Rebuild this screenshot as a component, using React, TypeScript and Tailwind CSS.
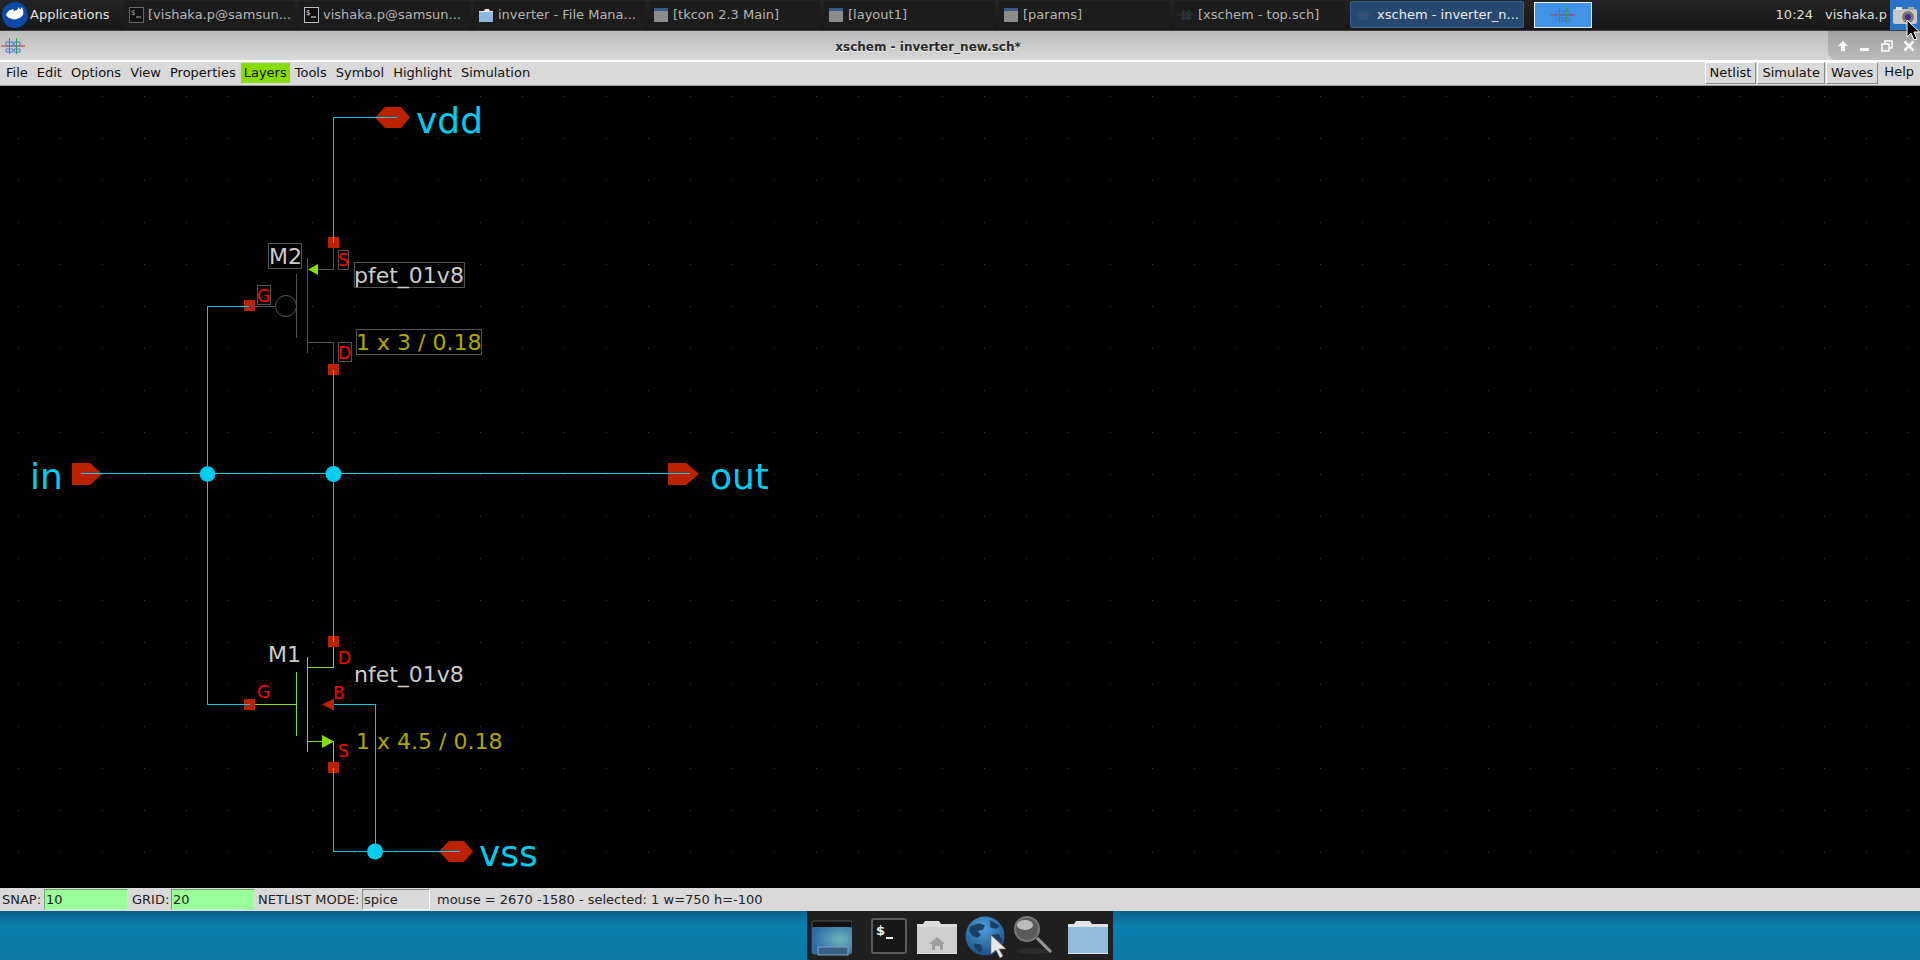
import React from "react";

const W = "#00ccee", R = "#bb2200", G = "#88dd00", S = "#555555", T = "#cccccc", O = "#aaaa00", X = "#ff0000";

function XIcon({ dim = false }: { dim?: boolean }) {
  return (
    <svg width="26" height="20" viewBox="0 0 26 20" className={dim ? "opacity-40" : ""}>
      <path d="M1 10h24" stroke="#c0392b" strokeWidth="1" />
      <path d="M9.500 2v16M16.500 2v16" stroke="#2e9e3a" strokeWidth="1" />
      <path d="M6 6h7v4H6zM6 13h7v3H6zM14 6h6v4h-6zM14 13h6v3h-6z" fill="none" stroke="#4a78c8" strokeWidth="1" />
    </svg>
  );
}

function TermIcon({ bright = false }: { bright?: boolean }) {
  return (
    <svg width="15" height="16" viewBox="0 0 15 16">
      <rect x="0.5" y="0.5" width="14" height="15" fill="#111" stroke={bright ? "#bbb" : "#666"} />
      <text x="2" y="8" fontSize="7" fill={bright ? "#eee" : "#aaa"}>$</text>
      <path d="M7 10h5" stroke={bright ? "#eee" : "#aaa"} />
    </svg>
  );
}

function FolderIcon() {
  return (
    <svg width="16" height="15" viewBox="0 0 16 15">
      <path d="M1 3h5l1-2h4l1 2h3v2H1z" fill="#e8e8e8" />
      <rect x="1" y="4" width="14" height="10" fill="#8fb8dc" />
    </svg>
  );
}

function WinIcon() {
  return (
    <svg width="14" height="14" viewBox="0 0 14 14">
      <rect width="14" height="14" fill="#8c8c8c" />
      <rect width="14" height="3" fill="#3b5a86" />
    </svg>
  );
}

function Cursor() {
  return (
    <svg width="14" height="22" viewBox="0 0 14 22">
      <path d="M1 1v17l4-4 3 7 3-1-3-7h5.500z" fill="#000" stroke="#fff" strokeWidth="1" />
    </svg>
  );
}

const tasks: { label: string; icon: React.ReactNode }[] = [
  { label: "[vishaka.p@samsun...", icon: <TermIcon /> },
  { label: "vishaka.p@samsun...", icon: <TermIcon bright /> },
  { label: "inverter - File Mana...", icon: <FolderIcon /> },
  { label: "[tkcon 2.3 Main]", icon: <WinIcon /> },
  { label: "[layout1]", icon: <WinIcon /> },
  { label: "[params]", icon: <WinIcon /> },
  { label: "[xschem - top.sch]", icon: <XIcon dim /> },
];

function TopPanel() {
  return (
    <div className="h-[31px] shrink-0 flex items-stretch bg-[linear-gradient(#242424,#171717)] border-b border-[#3a3a3a] text-[13px] text-[#b4b4b4]">
      <div className="w-[124px] flex items-center pl-[2px] gap-[2px] text-[#e2e2e2]">
        <svg width="26" height="26" viewBox="0 0 26 26" className="shrink-0">
          <circle cx="13" cy="13" r="13" fill="#0d4aa8" />
          <path d="M4 13c1-3 3-5 5-5l2-1 1 2 3-1 2-3 1 3 2-3 1 3c1 3 0 6-2 7-3 2-6 3-9 2-3-1-5-2-6-4z" fill="#fff" />
        </svg>
        <span>Applications</span>
      </div>
      <div className="flex gap-[4px] py-[1px]">
        {tasks.map((t) => (
          <div key={t.label} className="w-[171px] flex items-center gap-[3px] px-[3px] bg-[#1c1c1c] overflow-hidden whitespace-nowrap">
            <span className="w-[18px] flex justify-center shrink-0">{t.icon}</span>
            <span>{t.label}</span>
          </div>
        ))}
      </div>
      <div className="ml-[5px] mt-[1px] mb-[2px] w-[174px] flex items-center gap-[5px] px-[4px] rounded-[2px] bg-[#27486f] border border-[#37628f] text-[#ececec] whitespace-nowrap overflow-hidden">
        <XIcon dim />
        <span>xschem - inverter_n...</span>
      </div>
      <div className="ml-[10px] mt-[2px] mb-[2px] w-[58px] flex items-center justify-center bg-[#3f92e8] border border-[#f0f0f0]">
        <XIcon />
      </div>
      <div className="flex-1 flex items-center justify-end text-[#dcdcdc]">
        <span className="mr-[12px]">10:24</span>
        <span className="mr-[3px]">vishaka.p</span>
      </div>
      <div className="w-[30px] bg-[#2a73c4] flex items-center justify-center">
        <svg width="26" height="22" viewBox="0 0 26 22">
          <rect x="1" y="5" width="24" height="15" rx="2" fill="#c8c8c8" />
          <rect x="4" y="3" width="6" height="3" fill="#e6e6e6" />
          <rect x="16" y="3" width="6" height="3" fill="#aaa" />
          <circle cx="16" cy="13" r="6" fill="#777" />
          <circle cx="16" cy="13" r="3" fill="#4b2a8c" />
        </svg>
      </div>
    </div>
  );
}

function TitleBar() {
  return (
    <div className="h-[29px] shrink-0 flex items-stretch bg-[linear-gradient(#bcbcbc,#d8d8d8)]">
      <div className="w-[28px] flex items-center"><XIcon /></div>
      <div className="flex-1 flex items-center justify-center pt-[2px] text-[12px] font-bold text-[#2a2a2a] [text-shadow:0_1px_0_#f4f4f4]">
        xschem - inverter_new.sch*
      </div>
      <div className="w-[92px] flex items-center gap-[10px] pl-[9px] bg-[linear-gradient(#9f9f9f,#bdbdbd)] rounded-bl-[8px]">
        <svg width="12" height="12" viewBox="0 0 12 12"><path d="M6 1l5 5H8v5H4V6H1z" fill="#fff" /></svg>
        <svg width="12" height="12" viewBox="0 0 12 12"><rect x="1" y="8" width="9" height="3" fill="#fff" /></svg>
        <svg width="12" height="12" viewBox="0 0 12 12" fill="none" stroke="#fff" strokeWidth="1.500"><rect x="1" y="4" width="7" height="7" /><path d="M4 4V1h7v7H8" /></svg>
        <svg width="12" height="12" viewBox="0 0 12 12" fill="none" stroke="#fff" strokeWidth="2.500"><path d="M1.500 1.500l9 9M10.500 1.500l-9 9" /></svg>
      </div>
    </div>
  );
}

const menus = ["File", "Edit", "Options", "View", "Properties", "Layers", "Tools", "Symbol", "Highlight", "Simulation"];
const btns = ["Netlist", "Simulate", "Waves"];

function MenuBar() {
  return (
    <div className="h-[26px] shrink-0 flex items-center justify-between border-t-2 border-white bg-[#d9d9d9] border-b border-b-[#9a9a9a] pl-[2px] pr-[2px] text-[13px] text-[#111]">
      <div className="flex gap-[1px] -mt-[1px]">
        {menus.map((m) => (
          <div key={m} className={"h-[20px] leading-[20px] " + (m === "Layers" ? "bg-[#88dd00] px-[3px]" : "px-[4px]")}>{m}</div>
        ))}
      </div>
      <div className="flex gap-[1px] -mt-[1px]">
        {btns.map((b) => (
          <div key={b} className="h-[22px] leading-[19px] px-[4px] border border-t-white border-l-white border-r-[#8a8a8a] border-b-[#8a8a8a]">{b}</div>
        ))}
        <div className="h-[22px] leading-[20px] px-[4px] ml-[1px]">Help</div>
      </div>
    </div>
  );
}

function Line({ d, c }: { d: string; c: string }) {
  return <path d={d} fill="none" stroke={c} strokeWidth="1" shapeRendering="crispEdges" />;
}

function Pad({ x, y }: { x: number; y: number }) {
  return <rect x={x} y={y} width="11" height="11" fill={R} />;
}

function Txt({ x, y, c, s, children }: { x: number; y: number; c: string; s: number; children: React.ReactNode }) {
  return <text x={x} y={y} fill={c} fontSize={s}>{children}</text>;
}

function Canvas() {
  const dots: React.ReactNode[] = [];
  for (let i = 0; i < 46; i++) {
    for (let j = 0; j < 19; j++) {
      dots.push(<rect key={i + "-" + j} x={18 + 42 * i} y={96 + 42 * j} width="1" height="1" fill="#3c3c3c" />);
    }
  }
  return (
    <div className="flex-1 min-h-0 bg-black">
      <svg width="1920" height="802" viewBox="0 86 1920 802" className="block">
        {dots}
        <polygon points="375,117.500 385,107 401,107 410,117.500 401,128 385,128" fill={R} />
        <polygon points="72,463 90,463 102,474 90,485 72,485" fill={R} />
        <polygon points="668,463 686,463 699,474 686,485 668,485" fill={R} />
        <polygon points="439,851.500 449,841 464,841 473,851.500 464,862 449,862" fill={R} />
        <Pad x={328} y={237} />
        <Pad x={328} y={364} />
        <Pad x={244} y={300} />
        <Pad x={328} y={636} />
        <Pad x={244} y={699} />
        <Pad x={328} y={762} />
        <Line c={S} d="M333.500 248V269.500H318" />
        <Line c={S} d="M307.500 258V353" />
        <Line c={S} d="M296.500 274V338" />
        <Line c={S} d="M255 306.500H275" />
        <circle cx="286" cy="306" r="10.500" fill="none" stroke={S} strokeWidth="1" />
        <Line c={S} d="M307.500 342.500H333.500V364" />
        <polygon points="308,269.500 318,264 318,275" fill={G} />
        <Line c={S} d="M268.500 243.500H301.500V268.500H268.500Z" />
        <Line c={S} d="M354.500 262.500H464.500V287.500H354.500Z" />
        <Line c={S} d="M356.500 329.500H481.500V354.500H356.500Z" />
        <Line c={S} d="M338.500 250.500H348.500V269.500H338.500Z" />
        <Line c={S} d="M338.500 342.500H351.500V361.500H338.500Z" />
        <Line c={S} d="M257.500 285.500H270.500V304.500H257.500Z" />
        <Line c={G} d="M333.500 647V667.500H307.500" />
        <Line c={G} d="M307.500 657V752" />
        <Line c={G} d="M296.500 672V736" />
        <Line c={G} d="M255 704.500H296" />
        <Line c={G} d="M307.500 741.500H333.500V762" />
        <polygon points="322,735 334,741.500 322,748" fill={G} />
        <polygon points="322,704.500 334,698.500 334,710.500" fill={R} />
        <Line c={W} d="M397 117.500H333.500V243" />
        <Line c={W} d="M249 306.500H207.500V704.500H250" />
        <Line c={W} d="M333.500 370V642" />
        <Line c={W} d="M81 473.500H690" />
        <Line c={W} d="M333.500 768V851.500H460" />
        <Line c={W} d="M334 704.500H375.500V851" />
        <circle cx="207.500" cy="474" r="7.800" fill={W} />
        <circle cx="333.500" cy="474" r="8" fill={W} />
        <circle cx="375" cy="851.500" r="8" fill={W} />
        <Txt x={416} y={133} c={W} s={36}>vdd</Txt>
        <Txt x={30} y={489} c={W} s={36}>in</Txt>
        <Txt x={710} y={489} c={W} s={36}>out</Txt>
        <Txt x={479} y={866} c={W} s={36}>vss</Txt>
        <Txt x={269} y={264} c={T} s={22}>M2</Txt>
        <Txt x={354} y={283} c={T} s={22}>pfet_01v8</Txt>
        <Txt x={356} y={350} c={O} s={22}>1 x 3 / 0.18</Txt>
        <Txt x={268} y={662} c={T} s={22}>M1</Txt>
        <Txt x={354} y={682} c={T} s={22}>nfet_01v8</Txt>
        <Txt x={356} y={749} c={O} s={22}>1 x 4.5 / 0.18</Txt>
        <Txt x={338} y={266} c={X} s={17}>S</Txt>
        <Txt x={338} y={359} c={X} s={17}>D</Txt>
        <Txt x={257} y={302} c={X} s={17}>G</Txt>
        <Txt x={338} y={664} c={X} s={17}>D</Txt>
        <Txt x={257} y={698} c={X} s={17}>G</Txt>
        <Txt x={333} y={699} c={X} s={17}>B</Txt>
        <Txt x={338} y={757} c={X} s={17}>S</Txt>
      </svg>
    </div>
  );
}

function StatusBar() {
  return (
    <div className="h-[23px] shrink-0 flex items-center bg-[#d9d9d9] text-[13px] text-[#222] whitespace-nowrap pl-[2px]">
      <span className="w-[42px]">SNAP:</span>
      <div className="w-[84px] h-[21px] leading-[20px] pl-[1px] bg-[#99ff99] border border-t-[#6f9f6f] border-l-[#6f9f6f] border-b-[#c4f0c4] border-r-[#c4f0c4]">10</div>
      <span className="w-[39px] ml-[4px]">GRID:</span>
      <div className="w-[84px] h-[21px] leading-[20px] pl-[1px] bg-[#99ff99] border border-t-[#6f9f6f] border-l-[#6f9f6f] border-b-[#c4f0c4] border-r-[#c4f0c4]">20</div>
      <span className="w-[104px] ml-[3px]">NETLIST MODE:</span>
      <div className="w-[68px] h-[21px] leading-[20px] pl-[1px] border border-t-[#8a8a8a] border-l-[#8a8a8a] border-b-white border-r-white">spice</div>
      <span className="ml-[7px]">mouse = 2670 -1580 - selected: 1 w=750 h=-100</span>
    </div>
  );
}

function Dock() {
  return (
    <div className="h-[49px] shrink-0 flex justify-center bg-[linear-gradient(#09618a,#0b7fae_14px,#0b78a5)]">
      <div className="relative w-[306px] bg-[#1f1f1f] flex items-center pl-[1px]">
        <svg width="44" height="40" viewBox="0 0 44 40" className="shrink-0">
          <defs>
            <radialGradient id="dk" cx="0.7" cy="0.45" r="0.7"><stop offset="0" stopColor="#6fb3b8" /><stop offset="1" stopColor="#2c6aa8" /></radialGradient>
          </defs>
          <rect x="4" y="5" width="40" height="33" rx="2" fill="#111" stroke="#555" />
          <rect x="4" y="11" width="40" height="27" rx="2" fill="url(#dk)" />
          <rect x="10" y="31" width="30" height="8" fill="#3a5f86" stroke="#7fa6c8" />
        </svg>
        <svg width="36" height="36" viewBox="0 0 36 36" className="shrink-0 ml-[19px]">
          <rect x="1" y="1" width="34" height="34" rx="2" fill="#181818" stroke="#5a5a5a" strokeWidth="2" />
          <text x="5" y="17" fontSize="13" fontWeight="bold" fill="#eee">$</text>
          <path d="M15 20h7" stroke="#eee" strokeWidth="2" />
        </svg>
        <svg width="42" height="36" viewBox="0 0 42 36" className="shrink-0 ml-[9px]">
          <path d="M1 6h6l2-3h14l2 3h16v31H1z" fill="#dcdcdc" />
          <rect x="1" y="9" width="40" height="26" fill="#cfcfcf" />
          <path d="M21 19l8 7h-2v6h-3v-4h-5v4h-3v-6h-3z" fill="#9e9e9e" />
        </svg>
        <div className="relative shrink-0 ml-[7px]">
          <svg width="40" height="40" viewBox="0 0 38 38" className="block">
            <defs>
              <radialGradient id="gl" cx="0.45" cy="0.3" r="0.8"><stop offset="0" stopColor="#4ea0dc" /><stop offset="1" stopColor="#17447e" /></radialGradient>
            </defs>
            <circle cx="19" cy="19" r="18.500" fill="url(#gl)" />
            <path d="M5 10l8-3 6 2-2 4-5 1 3 4-3 3-5-2-3-5zM24 4l9 5-3 3-6-1zM8 26l7 1 2 5-3 3-5-5zM24 18l8-1 4 6-5 8-6-4z" fill="#1d3f66" />
          </svg>
          <svg width="17" height="26" viewBox="0 0 17 26" className="absolute left-[25px] top-[18px]">
            <path d="M1 1v19l5-4 4 8 3-2-4-7h7z" fill="#e8e8e8" stroke="#777" strokeWidth="0.700" />
          </svg>
        </div>
        <svg width="42" height="40" viewBox="0 0 42 40" className="shrink-0 ml-[7px]">
          <ellipse cx="22" cy="35" rx="17" ry="3" fill="#2b2b2b" />
          <path d="M25 22l14 14" stroke="#9a9a9a" strokeWidth="3" />
          <circle cx="15" cy="13" r="12" fill="#5a5a5a" stroke="#777" strokeWidth="2" />
          <ellipse cx="13" cy="9" rx="8" ry="5" fill="#bbb" />
        </svg>
        <svg width="42" height="36" viewBox="0 0 42 36" className="shrink-0 ml-[13px]">
          <path d="M1 6h6l2-3h14l2 3h16v31H1z" fill="#e4e4e4" />
          <rect x="1" y="9" width="40" height="26" fill="#8fbcdc" />
        </svg>
      </div>
    </div>
  );
}

export default function App() {
  return (
    <div className="relative w-[1920px] h-[960px] overflow-hidden flex flex-col bg-black font-['DejaVu_Sans',sans-serif]">
      <TopPanel />
      <TitleBar />
      <MenuBar />
      <Canvas />
      <StatusBar />
      <Dock />
      <div className="absolute left-[1906px] top-[19px]"><Cursor /></div>
    </div>
  );
}
